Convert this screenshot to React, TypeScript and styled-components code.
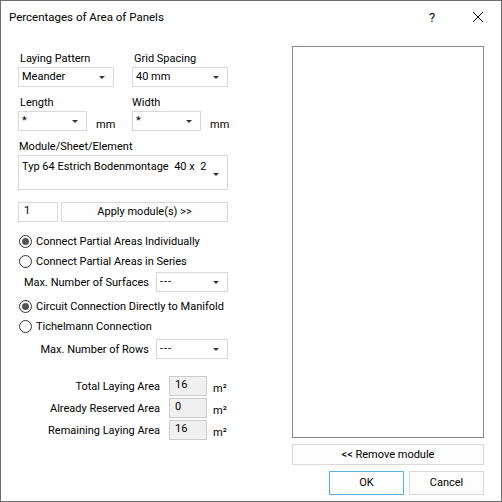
import styled, { createGlobalStyle } from "styled-components";

const GlobalStyle = createGlobalStyle`
  html, body {
    margin: 0;
    padding: 0;
    background: #ffffff;
  }
  body {
    font-family: Roboto, "Liberation Sans", sans-serif;
    font-size: 11px;
    color: #000000;
  }
  * {
    box-sizing: border-box;
  }
`;

const Window = styled.div`
  width: 502px;
  height: 502px;
  border: 1px solid #6f6f6f;
  background: #ffffff;
  display: flex;
  flex-direction: column;
  white-space: nowrap;
`;

const TitleBar = styled.div`
  height: 32px;
  display: flex;
  align-items: center;
  padding-left: 8px;
`;

const Title = styled.div`
  flex: 1;
  font-size: 11.5px;
  margin-top: -1px;
`;

const TitleButton = styled.div`
  width: 46px;
  height: 30px;
  display: flex;
  align-items: center;
  justify-content: center;
  font-size: 13px;
`;

const Body = styled.div`
  flex: 1;
  display: flex;
  padding: 13px 17px 0 17px;
  gap: 64px;
`;

const LeftColumn = styled.div`
  width: 210px;
  display: flex;
  flex-direction: column;
`;

const RightColumn = styled.div`
  width: 192px;
  display: flex;
  flex-direction: column;
`;

const Row = styled.div<{ $top?: number }>`
  display: flex;
  margin-top: ${(p) => p.$top ?? 0}px;
`;

const RadioGroup = styled.div<{ $top?: number }>`
  display: flex;
  flex-direction: column;
  margin-top: ${(p) => p.$top ?? 0}px;
`;

const Field = styled.div<{ $width: number }>`
  width: ${(p) => p.$width}px;
  display: flex;
  flex-direction: column;
`;

const Label = styled.div<{ $indent?: number }>`
  line-height: 16px;
  height: 14px;
  padding-left: ${(p) => p.$indent ?? 2}px;
  margin-bottom: 2px;
`;

const ComboBox = styled.div<{ $width?: number; $height?: number }>`
  width: ${(p) => (p.$width ? `${p.$width}px` : "100%")};
  height: ${(p) => p.$height ?? 20}px;
  border: 1px solid #d9d9d9;
  background: #ffffff;
  display: flex;
  align-items: flex-start;
  padding: 2px 0 0 3px;
  position: relative;
  flex-shrink: 0;
`;

const ComboText = styled.span<{ $spaced?: boolean }>`
  flex: 1;
  overflow: hidden;
  line-height: 14px;
  margin-right: 20px;
  letter-spacing: ${(p) => (p.$spaced ? "1px" : "normal")};
`;

const Arrow = styled.span<{ $y?: number }>`
  position: absolute;
  right: 8px;
  top: ${(p) => p.$y ?? 8}px;
  width: 0;
  height: 0;
  border-left: 3px solid transparent;
  border-right: 3px solid transparent;
  border-top: 3px solid #333333;
`;

const Unit = styled.div`
  align-self: flex-end;
  margin-left: 9px;
  line-height: 14px;
  margin-bottom: -1px;
`;

const ModuleBox = styled(ComboBox)`
  padding-top: 4px;
`;

const NumberInput = styled.div`
  width: 40px;
  height: 20px;
  border: 1px solid #d9d9d9;
  padding: 1px 0 0 5px;
  line-height: 14px;
`;

const PlainButton = styled.div<{ $width?: number; $height?: number; $focus?: boolean }>`
  width: ${(p) => (p.$width ? `${p.$width}px` : "100%")};
  height: ${(p) => p.$height ?? 21}px;
  border: 1px solid ${(p) => (p.$focus ? "#5cb0e0" : "#d9d9d9")};
  background: #fdfdfd;
  display: flex;
  align-items: center;
  justify-content: center;
  line-height: 14px;
  flex-shrink: 0;
`;

const RadioRow = styled.div`
  height: 20px;
  display: flex;
  align-items: center;
  padding-left: 1px;
`;

const RadioCircle = styled.span<{ $checked?: boolean }>`
  width: 13px;
  height: 13px;
  border-radius: 50%;
  border: 1px solid #333333;
  background: #ffffff;
  display: flex;
  align-items: center;
  justify-content: center;
  margin-right: 4px;

  &::after {
    content: "";
    display: ${(p) => (p.$checked ? "block" : "none")};
    width: 7px;
    height: 7px;
    border-radius: 50%;
    background: #555555;
  }
`;

const InlineRow = styled.div<{ $top?: number }>`
  display: flex;
  justify-content: flex-end;
  align-items: center;
  gap: 7px;
  margin-top: ${(p) => p.$top ?? 0}px;
`;

const AreaGrid = styled.div`
  display: grid;
  grid-template-columns: 143px 38px auto;
  row-gap: 2px;
  margin-top: 17px;
  align-items: center;
`;

const AreaLabel = styled.div`
  text-align: right;
  padding-right: 1px;
`;

const ReadOnlyBox = styled.div`
  margin-left: 8px;
  width: 38px;
  height: 20px;
  background: #f0f0f0;
  border: 1px solid #cccccc;
  padding: 1px 0 0 5px;
  line-height: 14px;
`;

const AreaUnit = styled.div`
  margin-left: 14px;
  margin-top: 4px;
`;

const ListBox = styled.div`
  height: 392px;
  border: 1px solid #828790;
  background: #ffffff;
`;

const ButtonRow = styled.div`
  display: flex;
  justify-content: flex-end;
  gap: 5px;
  margin-top: 6px;
`;

const CloseIcon = () => (
  <svg width="12" height="12" viewBox="0 0 12 12">
    <path d="M1 1 L11 11 M11 1 L1 11" stroke="#000" strokeWidth="1" />
  </svg>
);

const areas = [
  { label: "Total Laying Area", value: "16" },
  { label: "Already Reserved Area", value: "0" },
  { label: "Remaining Laying Area", value: "16" },
];

export default function App() {
  return (
    <>
      <GlobalStyle />
      <Window>
        <TitleBar>
          <Title>Percentages of Area of Panels</Title>
          <TitleButton>?</TitleButton>
          <TitleButton>
            <CloseIcon />
          </TitleButton>
        </TitleBar>
        <Body>
          <LeftColumn>
            <Row $top={5}>
              <Field $width={114}>
                <Label>Laying Pattern</Label>
                <ComboBox $width={96}>
                  <ComboText>Meander</ComboText>
                  <Arrow />
                </ComboBox>
              </Field>
              <Field $width={96}>
                <Label>Grid Spacing</Label>
                <ComboBox $width={96}>
                  <ComboText>40 mm</ComboText>
                  <Arrow />
                </ComboBox>
              </Field>
            </Row>
            <Row $top={8}>
              <Field $width={114}>
                <Label>Length</Label>
                <Row>
                  <ComboBox $width={69}>
                    <ComboText>*</ComboText>
                    <Arrow />
                  </ComboBox>
                  <Unit>mm</Unit>
                </Row>
              </Field>
              <Field $width={96}>
                <Label $indent={0}>Width</Label>
                <Row>
                  <ComboBox $width={69}>
                    <ComboText>*</ComboText>
                    <Arrow />
                  </ComboBox>
                  <Unit>mm</Unit>
                </Row>
              </Field>
            </Row>
            <Row $top={8}>
              <Field $width={210}>
                <Label $indent={1}>Module/Sheet/Element</Label>
                <ModuleBox $height={35}>
                  <ComboText>Typ 64 Estrich Bodenmontage&nbsp; 40 x&nbsp; 25</ComboText>
                  <Arrow $y={17} />
                </ModuleBox>
              </Field>
            </Row>
            <Row $top={12}>
              <NumberInput>1</NumberInput>
              <PlainButton $width={167} $height={20} style={{ marginLeft: 3 }}>
                Apply module(s) &gt;&gt;
              </PlainButton>
            </Row>
            <RadioGroup $top={9}>
              <RadioRow>
                <RadioCircle $checked />
                Connect Partial Areas Individually
              </RadioRow>
              <RadioRow>
                <RadioCircle />
                Connect Partial Areas in Series
              </RadioRow>
            </RadioGroup>
            <InlineRow $top={1}>
              <span>Max. Number of Surfaces</span>
              <ComboBox $width={72}>
                <ComboText $spaced>---</ComboText>
                <Arrow />
              </ComboBox>
            </InlineRow>
            <RadioGroup $top={4}>
              <RadioRow>
                <RadioCircle $checked />
                Circuit Connection Directly to Manifold
              </RadioRow>
              <RadioRow>
                <RadioCircle />
                Tichelmann Connection
              </RadioRow>
            </RadioGroup>
            <InlineRow $top={3}>
              <span>Max. Number of Rows</span>
              <ComboBox $width={72}>
                <ComboText $spaced>---</ComboText>
                <Arrow />
              </ComboBox>
            </InlineRow>
            <AreaGrid>
              {areas.map((a) => (
                <>
                  <AreaLabel key={a.label}>{a.label}</AreaLabel>
                  <ReadOnlyBox>{a.value}</ReadOnlyBox>
                  <AreaUnit>m²</AreaUnit>
                </>
              ))}
            </AreaGrid>
          </LeftColumn>
          <RightColumn>
            <ListBox />
            <PlainButton style={{ marginTop: 6 }}>&lt;&lt; Remove module</PlainButton>
            <ButtonRow>
              <PlainButton $width={75} $height={24} $focus>
                OK
              </PlainButton>
              <PlainButton $width={75} $height={24}>
                Cancel
              </PlainButton>
            </ButtonRow>
          </RightColumn>
        </Body>
      </Window>
    </>
  );
}
